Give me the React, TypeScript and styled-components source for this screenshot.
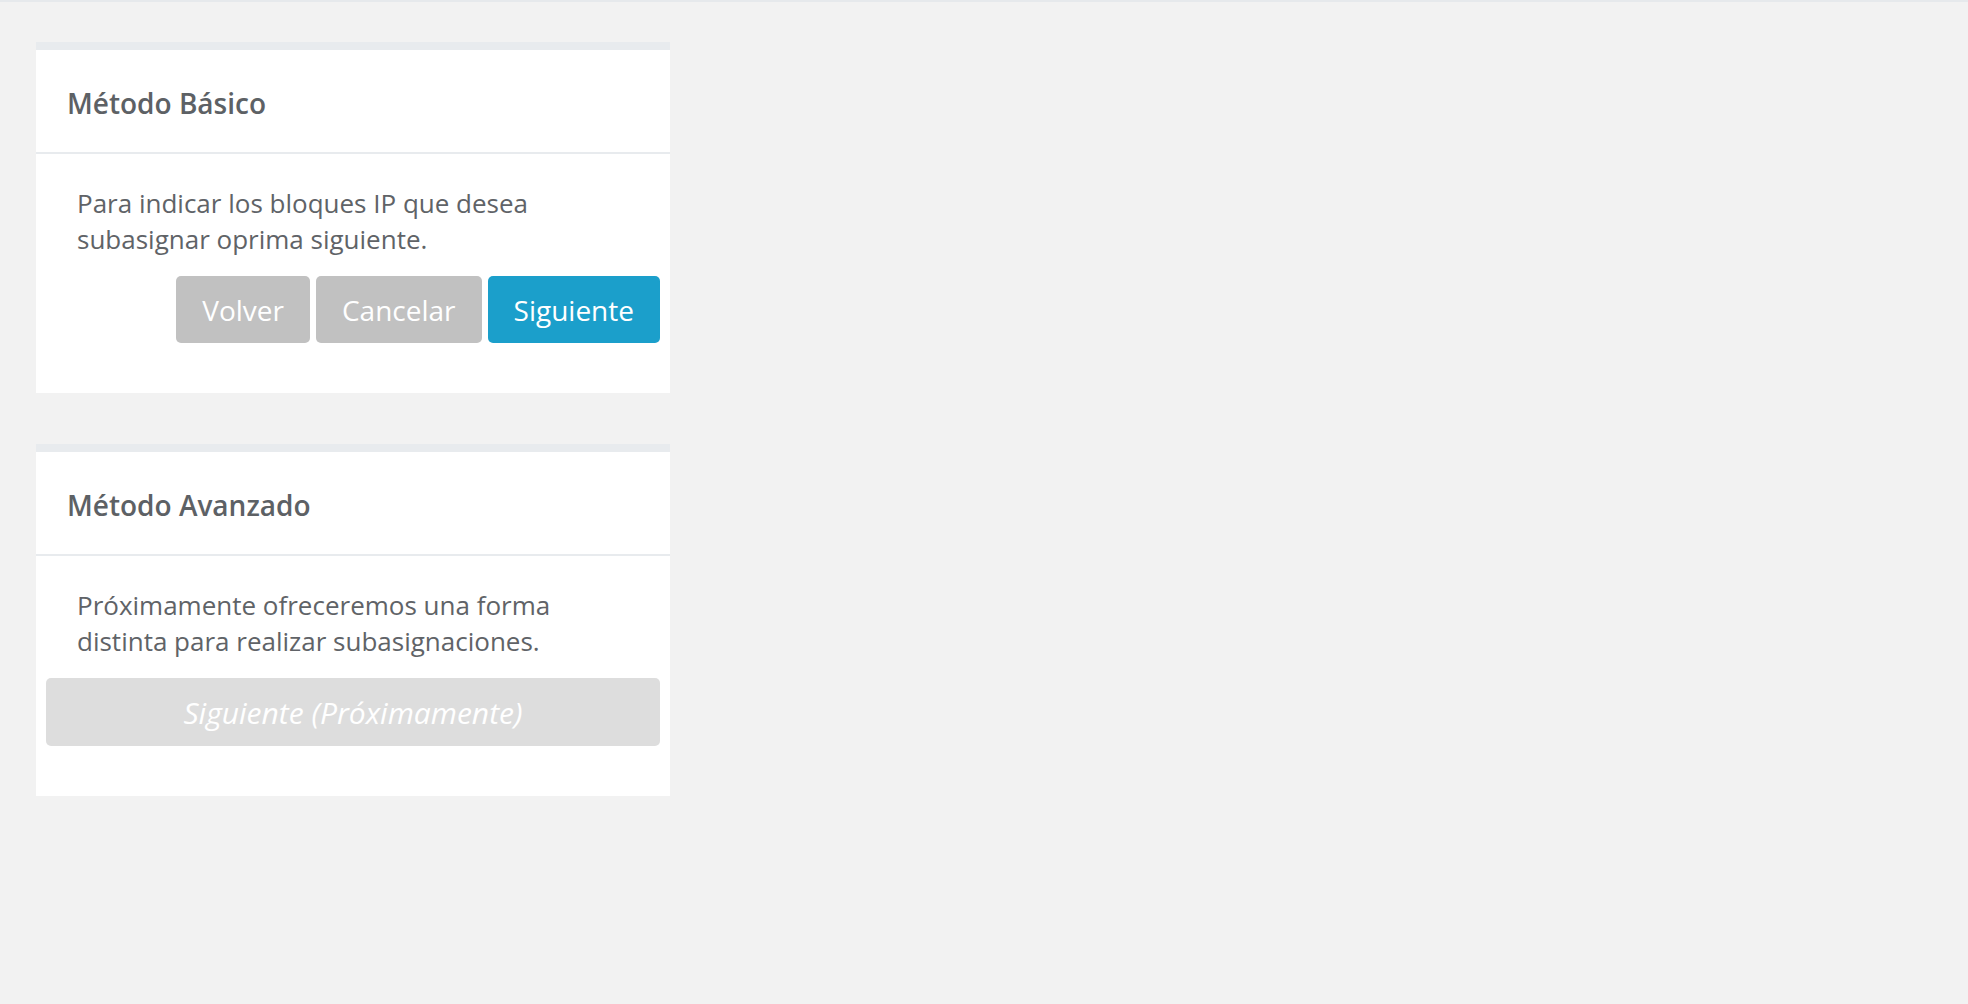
import React from 'react';
import styled, { createGlobalStyle } from 'styled-components';

const GlobalStyle = createGlobalStyle`
  html, body {
    margin: 0;
    padding: 0;
    background-color: #f2f2f2;
    font-family: "Open Sans", "Liberation Sans", sans-serif;
  }
  body {
    border-top: 2px solid #e6e9ec;
    min-height: 1002px;
  }
`;

const Page = styled.div`
  display: flex;
  flex-direction: column;
  gap: 51px;
  padding: 40px 0 0 36px;
`;

const Card = styled.section`
  width: 634px;
  background-color: #ffffff;
  border-top: 8px solid #e8ebee;
`;

const CardHeader = styled.div`
  height: 102px;
  display: flex;
  align-items: center;
  padding: 0 31px;
  border-bottom: 2px solid #e8ebee;
`;

const Title = styled.h3`
  margin: 0;
  padding-top: 4px;
  font-size: 28px;
  font-weight: 600;
  color: #5d6165;
`;

const CardBody = styled.div`
  padding: 31px 10px 50px;
`;

const Text = styled.p`
  margin: 0 0 19px;
  padding: 0 31px;
  font-size: 26px;
  line-height: 36px;
  color: #606367;
`;

const Actions = styled.div`
  display: flex;
  justify-content: flex-end;
  gap: 6px;
`;

const Button = styled.button<{ $variant: 'muted' | 'primary' }>`
  height: 67px;
  padding: 0 26px;
  border: none;
  border-radius: 5px;
  font-family: "Open Sans", "Liberation Sans", sans-serif;
  font-size: 28px;
  color: #ffffff;
  background-color: ${props => props.$variant === 'primary' ? '#1b9fcb' : '#c1c1c1'};
  cursor: pointer;
`;

const DisabledButton = styled.button`
  display: block;
  width: 100%;
  height: 68px;
  border: none;
  border-radius: 5px;
  font-family: "Open Sans", "Liberation Sans", sans-serif;
  font-size: 30px;
  font-style: italic;
  color: #ffffff;
  background-color: #dddddd;
`;

export default function App() {
  return (
    <>
      <GlobalStyle />
      <Page>
        <Card>
          <CardHeader>
            <Title>Método Básico</Title>
          </CardHeader>
          <CardBody>
            <Text>Para indicar los bloques IP que desea subasignar oprima siguiente.</Text>
            <Actions>
              <Button $variant="muted">Volver</Button>
              <Button $variant="muted">Cancelar</Button>
              <Button $variant="primary">Siguiente</Button>
            </Actions>
          </CardBody>
        </Card>
        <Card>
          <CardHeader>
            <Title>Método Avanzado</Title>
          </CardHeader>
          <CardBody>
            <Text>Próximamente ofreceremos una forma distinta para realizar subasignaciones.</Text>
            <DisabledButton disabled>Siguiente (Próximamente)</DisabledButton>
          </CardBody>
        </Card>
      </Page>
    </>
  );
}
